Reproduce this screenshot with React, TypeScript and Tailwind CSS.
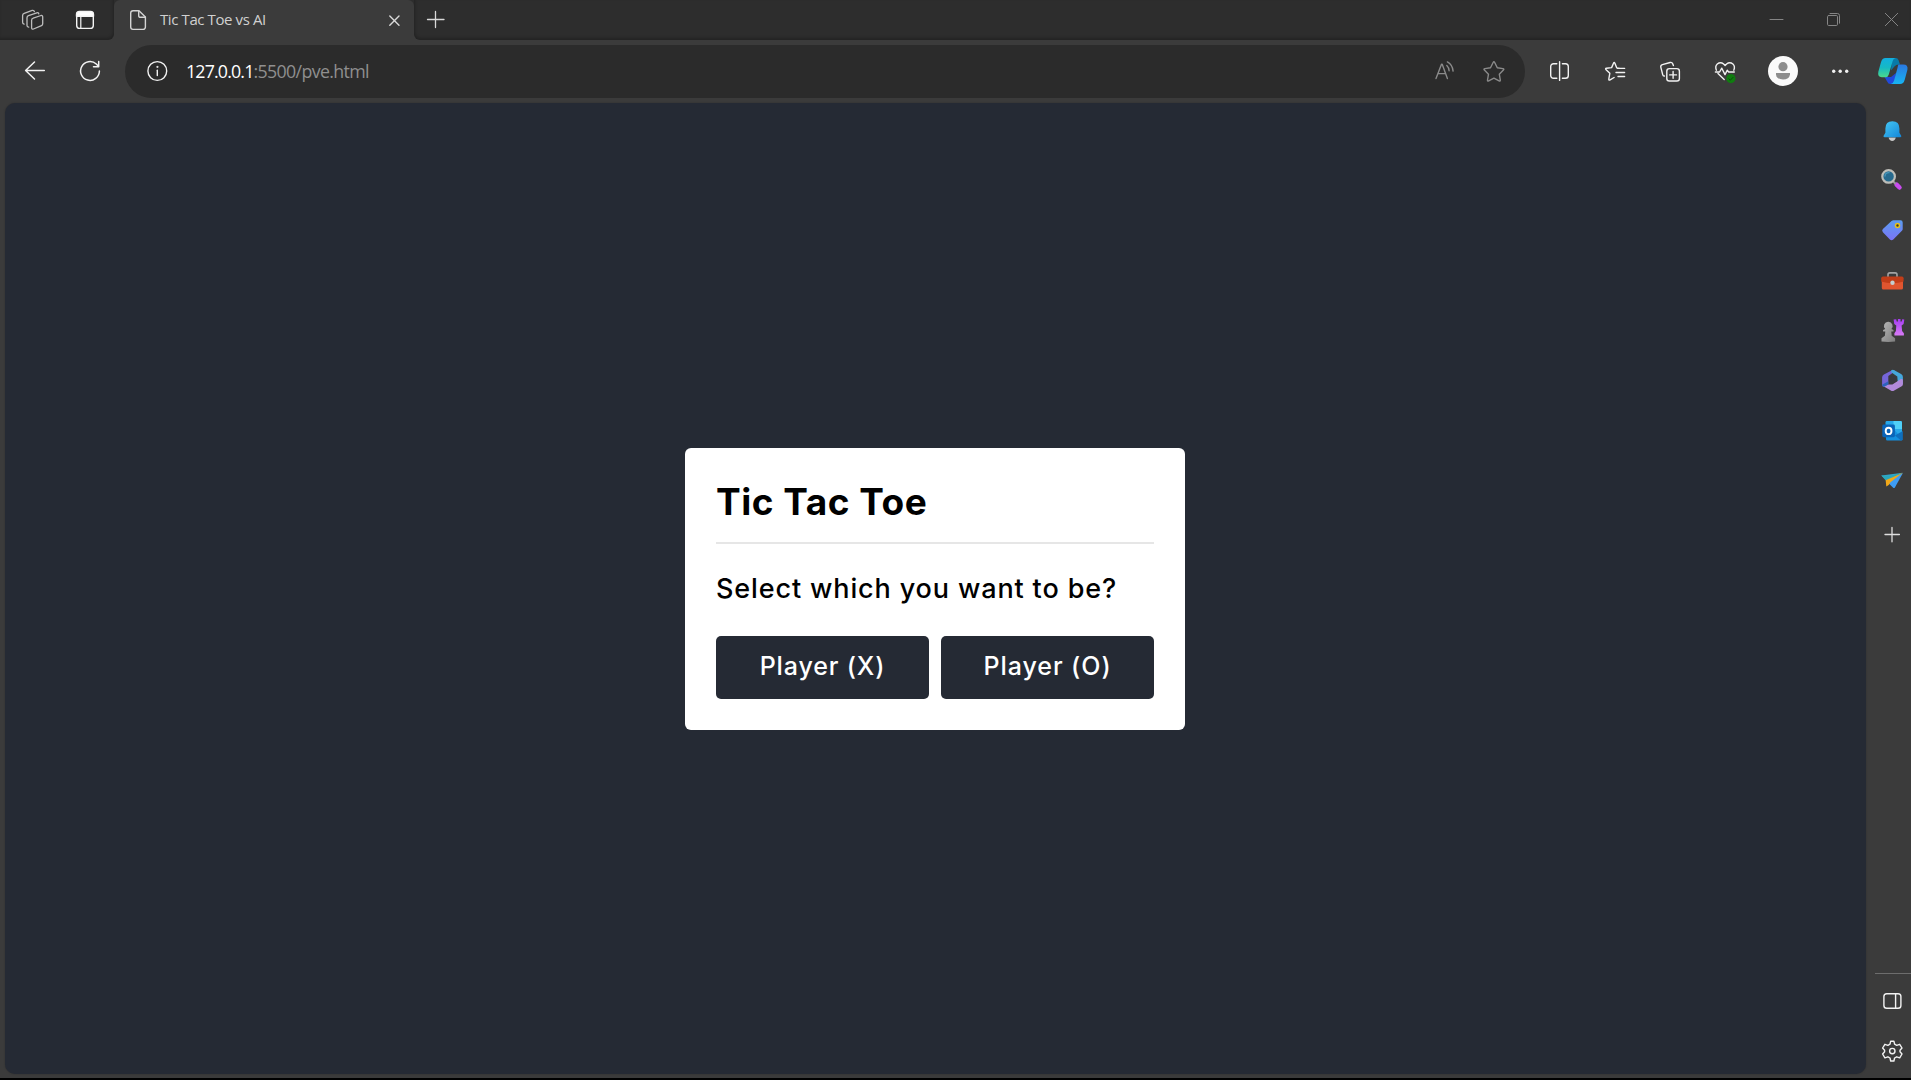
import type { ReactNode } from "react";

type Box = [x: number, y: number, w: number, h: number];

function Icon({ box, stroke = "#f2f2f2", sw = 1.5, children }: { box: Box; stroke?: string; sw?: number; children: ReactNode }) {
  return (
    <svg
      className="block shrink-0"
      width={box[2]}
      height={box[3]}
      viewBox={box.join(" ")}
      fill="none"
      stroke={stroke}
      strokeWidth={sw}
      strokeLinecap="round"
      strokeLinejoin="round"
    >
      {children}
    </svg>
  );
}

function TabStrip() {
  return (
    <div className="flex h-10 shrink-0 bg-[#3b3b3b]">
      <div className="flex w-[114px] rounded-br-md bg-[#2d2d2d] shadow-[inset_-1px_-2px_3px_rgba(0,0,0,0.22)]">
        <Icon box={[0, 0, 56, 40]} stroke="#bdbdbd" sw={1.3}>
          <path d="M33.2 18.2 41 15.5q1.7-.4 1.7 1.4v6.9q0 1.3-1.2 1.8l-8 3.4q-1.9.6-1.9-1.2v-7.6q0-1.5 1.6-2Z" />
          <path d="M38.8 13.9q-.2-1.5-2-1.1l-8.3 2.9q-1.5.6-1.5 2.1v7.6q0 1.4 1.7 1.7" />
          <path d="M34.4 11.6q-.4-1.6-2.2-1.2l-8 2.9q-1.6.6-1.6 2.1v6.9q0 1.5 1.5 1.8" />
        </Icon>
        <Icon box={[56, 0, 58, 40]} stroke="#f4f4f4" sw={1.4}>
          <rect x="76.7" y="12" width="16.6" height="16.4" rx="3" />
          <path d="M76.5 16.2V14.5a3 3 0 0 1 3-3h11a3 3 0 0 1 3 3v1.7Z" fill="#fff" />
          <path d="M80.8 17v11" strokeWidth="1.2" />
        </Icon>
      </div>
      <div className="w-[300px] bg-[#2d2d2d]">
        <div className="flex h-10 items-start rounded-t-md bg-[#3b3b3b]">
          <Icon box={[114, 0, 46, 40]} stroke="#d4d4d4" sw={1.4}>
            <path d="M133 10.7h6l6.4 6.2v10.2a2.3 2.3 0 0 1-2.3 2.3H133a2.3 2.3 0 0 1-2.3-2.3V13a2.3 2.3 0 0 1 2.3-2.3Z" />
            <path d="M138.7 10.9v4.5q0 1.9 1.9 1.9h4.6" />
          </Icon>
          <span className="grow whitespace-nowrap font-['Open_Sans',sans-serif] text-[15px] leading-[38px] tracking-[-0.4px] text-[#d0d0d0]">
            Tic Tac Toe vs AI
          </span>
          <Icon box={[376, 0, 38, 40]} stroke="#dadada" sw={1.4}>
            <path d="m389.8 16 9.2 9.2m0-9.2-9.2 9.2" />
          </Icon>
        </div>
      </div>
      <div className="flex grow justify-between rounded-bl-md bg-[#2d2d2d] shadow-[inset_1px_-2px_3px_rgba(0,0,0,0.22)]">
        <Icon box={[414, 0, 46, 40]} stroke="#d8d8d8" sw={1.3}>
          <path d="M427.5 19.5h16.5M435.5 11.5v16" />
        </Icon>
        <div className="flex">
          <Icon box={[1747, 0, 58, 40]} stroke="#858585" sw={1}>
            <path d="M1770 19.5h13" />
          </Icon>
          <Icon box={[1805, 0, 58, 40]} stroke="#858585" sw={1}>
            <rect x="1827.5" y="15.5" width="10" height="10" rx="1.2" />
            <path d="M1830 13.5h7.4q2.1 0 2.1 2.1v7.6" />
          </Icon>
          <Icon box={[1863, 0, 48, 40]} stroke="#858585" sw={1}>
            <path d="m1885.3 13.3 12.4 12.4m0-12.4-12.4 12.4" />
          </Icon>
        </div>
      </div>
    </div>
  );
}

function AddressBar() {
  return (
    <div className="flex h-[53px] w-[1400px] items-center rounded-full bg-[#2b2b2b]">
      <Icon box={[125, 45, 61, 53]} sw={1.4}>
        <circle cx="157.3" cy="71" r="9.4" />
        <path d="M157.3 70.2v5.3" />
        <circle cx="157.3" cy="66.9" r=".6" fill="#f2f2f2" strokeWidth=".8" />
      </Icon>
      <div className="grow whitespace-nowrap font-['Open_Sans',sans-serif] text-[17.8px] leading-[53px]">
        <span className="tracking-[-0.83px] text-white">127.0.0.1</span>
        <span className="tracking-[-0.66px] text-[#8f8f8f]">:5500/pve.html</span>
      </div>
      <Icon box={[1420, 45, 50, 53]} stroke="#8a8a8a" sw={1.4}>
        <path d="m1436 78.5 5.5-14.2h.7l5.2 14.2M1437.9 73.6h7.7" />
        <path d="M1446.8 65.4q2.2 2 2.3 5.4M1447.4 61.9q5.2 3 5.7 9.2" />
      </Icon>
      <Icon box={[1470, 45, 55, 53]} stroke="#8a8a8a" sw={1.4}>
        <path d="M1493.1 62.5q.8-1.4 1.6 0l2.6 5.3 5.6.8q1.6.3.5 1.5l-4.1 4.1 1 5.8q.1 1.5-1.2.9l-5.2-2.7-5.2 2.7q-1.4.6-1.2-.9l1-5.8-4.1-4.1q-1.1-1.2.5-1.5l5.6-.8Z" />
      </Icon>
    </div>
  );
}

function Toolbar() {
  return (
    <div className="flex h-[63px] shrink-0 items-start pt-[5px]">
      <Icon box={[0, 45, 62, 53]} sw={1.5}>
        <path d="M44.3 70.5H25.8M34.5 62l-8.9 8.5 8.9 8.5" />
      </Icon>
      <Icon box={[62, 45, 63, 53]} sw={1.5}>
        <path d="M99.4 71a9.4 9.4 0 1 1-3.1-7l2.4 2.6M98.7 61.6v5.2h-5.2" />
      </Icon>
      <AddressBar />
      <Icon box={[1525, 45, 61, 53]} sw={1.4}>
        <path d="M1556.8 63.7h-3.3a2.8 2.8 0 0 0-2.8 2.8v9a2.8 2.8 0 0 0 2.8 2.8h3.3M1562.4 63.7h3.1a2.8 2.8 0 0 1 2.8 2.8v9a2.8 2.8 0 0 1-2.8 2.8h-3.1M1559.6 61.8v18.6" />
      </Icon>
      <Icon box={[1586, 45, 57, 53]} sw={1.4}>
        <path d="M1620 68.4 1617.3 68q-.5-.1-.7-.6l-1.7-4.2q-.7-1.5-1.4 0l-1.9 4.4-5.1.7q-1.6.3-.4 1.4l3.7 3.6-1 5.7q-.1 1.7 1.3.8l4-2.3M1617.6 68.4h7M1616 72.5h8.6M1618 76.5h6.6" />
      </Icon>
      <Icon box={[1643, 45, 55, 53]} sw={1.4}>
        <rect x="1666.8" y="68.6" width="12.6" height="12.4" rx="2.6" />
        <path d="M1673.1 71.5v6.8M1669.7 74.9h6.8M1673.4 65.6l-.7-1.8q-.7-1.8-2.6-1.3l-7.7 2.1q-2 .6-1.6 2.5l1.9 7.5q.4 1.6 1.7 1.4" />
      </Icon>
      <Icon box={[1698, 45, 54, 53]} sw={1.4}>
        <path d="M1716.4 70.2q-1.6-4 .9-6.2 3.2-2.6 6.3 0l1.5 1.5 1.5-1.5q3.1-2.6 6.3 0 2.5 2.2.9 6.2M1715.4 72h4.2l2.2-3.8 3.2 6.4 2.2-4.4 1.5 1.8h5.6M1718 73.6l6.2 6" />
        <circle cx="1730.9" cy="78.6" r="4.6" fill="#107c10" stroke="none" />
        <path d="m1728.8 78.8 1.5 1.4 2.7-2.8" stroke="#0a4f0a" strokeWidth="1" />
      </Icon>
      <Icon box={[1752, 45, 62, 53]} stroke="none">
        <circle cx="1783" cy="71" r="15" fill="#fafafa" />
        <circle cx="1783" cy="66.7" r="4.6" fill="#8d8d8d" />
        <path d="M1776 73h14v1.4q-.8 5-7 5t-7-5Z" fill="#8d8d8d" />
      </Icon>
      <Icon box={[1814, 45, 52, 53]} stroke="none">
        <g fill="#f0f0f0">
          <circle cx="1833.7" cy="71.2" r="1.7" />
          <circle cx="1840.2" cy="71.2" r="1.7" />
          <circle cx="1846.7" cy="71.2" r="1.7" />
        </g>
      </Icon>
      <Icon box={[1866, 45, 45, 53]} stroke="none">
        <defs>
          <linearGradient id="cpA" x1="0" y1="0" x2="0" y2="1">
            <stop offset="0" stopColor="#12aee0" />
            <stop offset=".5" stopColor="#16b9c4" />
            <stop offset="1" stopColor="#4bd88b" />
          </linearGradient>
          <linearGradient id="cpB" x1="0" y1="0" x2="0" y2="1">
            <stop offset="0" stopColor="#2a78e0" />
            <stop offset="1" stopColor="#17b4f2" />
          </linearGradient>
        </defs>
        <path d="M1892 58h3.8q2 0 2.8 2.2l1.4 4.4q-4-.3-5.6 1.9l-3.4 4Z" fill="#087aa8" />
        <path d="M1884.5 77h6.5l5-4-1.5 11h-4.2q-2.2 0-3-2.3Z" fill="#2149dc" />
        <path d="M1885.6 58h10q-2.3.5-3 3.2l-3.8 13.2q-.8 2.8-3.4 2.8h-3.6q-4.6 0-3.4-5.6l2.5-9.2q1.2-4.4 4.7-4.4Z" fill="url(#cpA)" />
        <path d="M1898.4 64.6h4.8q5.2 0 4.2 5.2l-2.6 9.6q-1.2 4.6-4.8 4.6h-9.2q2.4-.6 3.2-3.3l3.4-12.5q.5-2.2 1-3.6Z" fill="url(#cpB)" />
      </Icon>
    </div>
  );
}

function Sidebar() {
  return (
    <aside className="flex w-[45px] shrink-0 flex-col pt-[3px]">
      <Icon box={[1866, 106, 45, 50]} stroke="none">
        <defs>
          <linearGradient id="bell" x1="0" y1="0" x2="1" y2="1">
            <stop offset="0" stopColor="#45c8f5" />
            <stop offset="1" stopColor="#1486d8" />
          </linearGradient>
        </defs>
        <path d="M1888.6 137.5h7.2q-.8 3.4-3.6 3.4t-3.6-3.4Z" fill="#c9c9c9" />
        <path d="M1885.4 128.5q0-7.3 7-7.3t7 7.3v4.3l1.8 3q.6 1.4-.9 1.4h-15.8q-1.5 0-.9-1.4l1.8-3Z" fill="url(#bell)" />
      </Icon>
      <Icon box={[1866, 156, 45, 50]}>
        <path d="m1896.6 184.7 2.9 2.8" stroke="#c94bee" strokeWidth="4.5" />
        <path d="m1893 181.2 2 2" stroke="#9a9a9a" strokeWidth="2" />
        <circle cx="1888.6" cy="176.4" r="6.3" fill="#276a8e" stroke="#bdbdb8" strokeWidth="2.2" />
        <path d="M1885 176a3.8 3.8 0 0 1 4-3.4" stroke="#4794b8" strokeWidth="1.4" />
      </Icon>
      <Icon box={[1866, 206, 45, 50]} stroke="none">
        <defs>
          <linearGradient id="tag" x1="0" y1="0" x2="0" y2="1">
            <stop offset="0" stopColor="#5b9cf0" />
            <stop offset="1" stopColor="#7b74f6" />
          </linearGradient>
        </defs>
        <path d="M1893.6 220.3h6.9q2.2 0 2.2 2.2v6.4q0 1-.8 1.9l-8.6 8.7q-1.7 1.6-3.4 0l-7-7.2q-1.5-1.6 0-3.2l8.6-8q1-.8 2.1-.8Z" fill="url(#tag)" />
        <circle cx="1897.5" cy="225.5" r="2" fill="#3c3a26" stroke="#e8c21c" strokeWidth="1.5" />
      </Icon>
      <Icon box={[1866, 256, 45, 50]} stroke="none">
        <path d="M1888 277v-2.3q0-1.8 1.8-1.8h5.4q1.8 0 1.8 1.8v2.3" stroke="#a3a3a3" strokeWidth="1.6" fill="none" />
        <rect x="1881.8" y="280" width="21.2" height="9.6" rx="1.6" fill="#e0552f" />
        <path d="M1883 276.6h19q1.6 0 1.6 1.6v3.3q-5 1.8-11.1 1.8t-11.3-1.8v-3.3q0-1.6 1.8-1.6Z" fill="#c13d18" />
        <circle cx="1892.5" cy="282.8" r="2.2" fill="#c3cfd0" />
      </Icon>
      <Icon box={[1866, 306, 45, 50]} stroke="none">
        <defs>
          <linearGradient id="rook" x1="0" y1="0" x2="0" y2="1">
            <stop offset="0" stopColor="#a63df2" />
            <stop offset="1" stopColor="#d77bf5" />
          </linearGradient>
          <linearGradient id="pawn" x1="0" y1="0" x2="1" y2="1">
            <stop offset="0" stopColor="#b8b8b8" />
            <stop offset="1" stopColor="#7d7d7d" />
          </linearGradient>
        </defs>
        <path d="M1893.6 319.6l2.6-.4.5 2.4h1.2v-2.5h2.6v2.5h1.2l.5-2.4 2.1.4-.7 4.4-2 1.5.5 5.6 1.8 2.2v2.3h-9.5v-2.4l1.5-2.2.4-5.5-2-1.5Z" fill="url(#rook)" />
        <path d="M1888.4 321.8a4.2 4.2 0 0 1 3 7.2l2.1 1v1.6h-2.2l.4 4.2 3.4 2.4v3.4q-6.8.8-13.6 0v-3.4l3.4-2.4.4-4.2h-2.2V330l2.1-1a4.2 4.2 0 0 1 3.2-7.2Z" fill="url(#pawn)" />
      </Icon>
      <Icon box={[1866, 356, 45, 50]} stroke="none">
        <path d="m1892.5 370-8.6 4.6q-1.8 1-1.8 3v7.2q0 2.2 2 1.9l4.2-2.1v-8.7l7-4.8Z" fill="#7565d8" />
        <path d="M1891.3 370.2q1.5-.8 3 0l6.8 3.8q1.8 1 1.8 3v7.3q-2.2-.6-5.2-2.7l-.4-5.1-6.1-4.2Z" fill="#45a7dc" />
        <path d="M1888.6 384.4h3.8l8.5-5.3q2-.4 2 1.4v3.7q0 1.4-1.2 2.1l-7.5 4.2q-1.7 1-3.4 0l-7.3-4.2Z" fill="#b28adb" />
        <path d="m1882.1 384.8 6.2-3.6v3.4l-4.6 2.3q-1.6-.5-1.6-2.1Z" fill="#2c63bd" />
        <path d="m1889 377.2 3.5-1.8 4 2.2v3.6l-4 2.4-3.5-.6Z" fill="#373940" />
      </Icon>
      <Icon box={[1866, 406, 45, 50]} stroke="none">
        <rect x="1885.5" y="421" width="16.5" height="17" rx="1.4" fill="#28a8ea" />
        <path d="M1893.5 421h7q1.5 0 1.5 1.5v6.5h-8.5Z" fill="#50d0f8" />
        <path d="M1886 430.5h9l7.6 8.8q-.5 1.2-1.7 1.2h-13.6q-1.3 0-1.3-1.3Z" fill="#1490df" />
        <path d="M1902.8 431v8q0 1.5-1.8 1.5l-6-5Z" fill="#0f6fbd" />
        <rect x="1882.3" y="424.6" width="12.6" height="12.6" rx="1.4" fill="#0a64b8" />
        <ellipse cx="1888.6" cy="430.9" rx="2.9" ry="3.2" fill="none" stroke="#fff" strokeWidth="1.9" />
      </Icon>
      <Icon box={[1866, 456, 45, 50]} stroke="none">
        <path d="m1881.3 475.6 21.4-2.8-16.4 7.3Z" fill="#2fa5c9" />
        <path d="m1902.9 473-8 14.4q-.8 1-1.7.3l-7-6.6Z" fill="#3e9cf3" />
        <path d="m1902.7 472.8-17.2 6 .8 7.8q3-1.6 4.2-4.4Z" fill="#f2a818" />
        <path d="m1881.3 475.6 4.3 4.6 17-7.3-14 3.3Z" fill="#2aa7bb" />
      </Icon>
      <Icon box={[1866, 506, 45, 50]} stroke="#dedede" sw={1.3}>
        <path d="M1885 534.5h14.4M1892 527.4v14.4" />
      </Icon>
      <div className="mt-auto ml-[9px] h-px w-9 bg-[#6d6d6d]" />
      <Icon box={[1866, 974, 45, 52]} sw={1.4}>
        <rect x="1883.9" y="993.8" width="17" height="14.4" rx="2.8" />
        <path d="M1895.6 994v14" />
      </Icon>
      <Icon box={[1866, 1026, 45, 52]} sw={1.4}>
        <path d="M1890.7 1041.2h3.2l.7 3 2.1 1.1 3-1 2.3 3.7-2 2.2v1.6l2 2.2-2.3 3.8-3-1-2.1 1.2-.7 3h-3.2l-.7-3-2.1-1.2-3 1-2.3-3.8 2-2.2v-1.6l-2-2.2 2.3-3.7 3 1 2.1-1.1Z" />
        <circle cx="1892.3" cy="1051.1" r="2.7" />
      </Icon>
    </aside>
  );
}

function PlayerButton({ mark, className }: { mark: string; className: string }) {
  return (
    <button className={`h-[63.3px] flex-1 rounded-[5px] bg-[#252a34] pb-px text-[25px] font-medium text-white ${className}`}>
      Player ({mark})
    </button>
  );
}

function SelectBox() {
  return (
    <section className="h-[281.4px] w-[500px] rounded-[6px] bg-white px-[31px] font-['Inter',sans-serif] text-black">
      <h1 className="h-[95.4px] border-b-2 border-[#e6e6e6] pt-7 text-[37px] leading-[52px] font-[650] tracking-[0.5px]">
        Tic Tac Toe
      </h1>
      <p className="pt-[25px] text-[27px] leading-10 font-medium tracking-[0.87px] whitespace-nowrap">
        Select which you want to be?
      </p>
      <div className="mt-[27px] flex gap-3">
        <PlayerButton mark="X" className="tracking-[0.85px]" />
        <PlayerButton mark="O" className="tracking-[0.95px]" />
      </div>
    </section>
  );
}

export default function App() {
  return (
    <div className="h-[1080px] w-[1911px] overflow-hidden bg-black pb-0.5">
      <div className="flex h-full flex-col bg-[#3b3b3b]">
        <TabStrip />
        <Toolbar />
        <div className="flex min-h-0 grow">
          <main className="mb-1 ml-[5px] flex w-[1861px] items-center justify-center rounded-[10px] bg-[#252a34] pt-px pr-px shadow-[0_0_2px_rgba(0,0,0,0.25)]">
            <SelectBox />
          </main>
          <Sidebar />
        </div>
      </div>
    </div>
  );
}
